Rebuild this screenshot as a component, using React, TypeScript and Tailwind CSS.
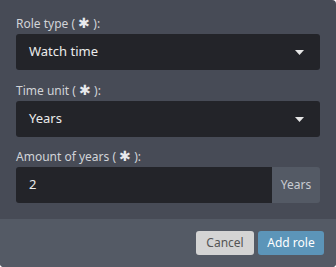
import * as React from "react";

const fieldCls =
  "flex h-9 w-full items-center rounded-[3px] bg-[#232429] pl-[13px] pr-4 text-[13px] text-[#ececec]";

function Caret() {
  return (
    <svg width="9" height="5" viewBox="0 0 9 5" className="shrink-0">
      <path d="M0 0 H9 L4.5 5 Z" fill="#e6e6e6" />
    </svg>
  );
}

function Label({ text }: { text: string }) {
  return (
    <div className="mb-[2px] h-[18px] text-[12px] leading-[18px] text-[#d2d4d8]">
      {text} ( <span className="text-[14px] leading-[18px] text-[#e8e9ec]">✱</span> ):
    </div>
  );
}

export default function App() {
  return (
    <div
      className="h-[267px] w-[336px] bg-white"
      style={{ fontFamily: '"Noto Sans", "Open Sans", sans-serif' }}
    >
      <div className="flex h-full flex-col overflow-hidden rounded-tr-[4px] rounded-b-[4px] bg-[#474b56]">
        <div className="flex flex-col px-4 pt-[14px] pb-4">
          <Label text="Role type" />
          <div className={fieldCls}>
            <span className="flex-1">Watch time</span>
            <Caret />
          </div>

          <div className="mt-[11px]">
            <Label text="Time unit" />
            <div className={fieldCls}>
              <span className="flex-1">Years</span>
              <Caret />
            </div>
          </div>

          <div className="mt-[10px]">
            <Label text="Amount of years" />
            <div className="flex h-9 w-full">
              <div className="flex flex-1 items-center rounded-l-[3px] bg-[#232429] pl-[13px] text-[13px] text-[#ececec]">
                2
              </div>
              <div className="flex w-12 items-center justify-center rounded-r-[3px] bg-[#545a65] text-[12px] text-[#c9ccd2]">
                Years
              </div>
            </div>
          </div>
        </div>

        <div className="flex flex-1 items-center justify-end gap-1 bg-[#545a65] pr-3">
          <button className="h-6 w-[58px] rounded-[3px] bg-[#d4d4d4] text-[12px] text-[#555]">
            Cancel
          </button>
          <button className="h-6 w-[66px] rounded-[3px] bg-[#5c95b9] text-[12px] text-white">
            Add role
          </button>
        </div>
      </div>
    </div>
  );
}
